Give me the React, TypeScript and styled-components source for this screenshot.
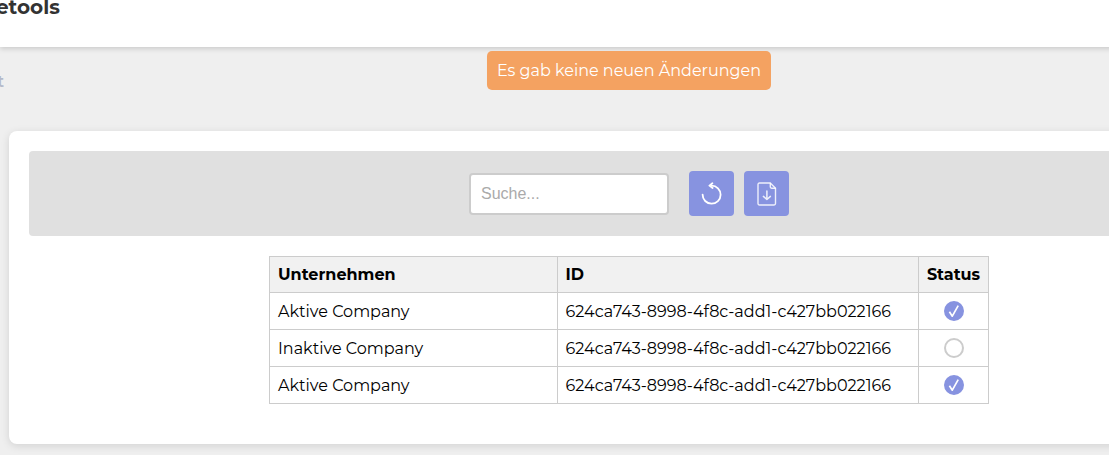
import React from "react";
import styled, { createGlobalStyle } from "styled-components";

const GlobalStyle = createGlobalStyle`
  * { box-sizing: border-box; }
  html { background: #efefef; }
  body {
    margin: 0;
    overflow: hidden;
    background: #efefef;
    color: #000;
    font-family: Montserrat, Inter, sans-serif;
    font-size: 16px;
    line-height: 19px;
  }
`;

/* The workspace runs past the right edge of the window. */
const Page = styled.div`
  width: calc(100% + 149px);
  padding-bottom: 12px;
`;

const Header = styled.header`
  height: 47px;
  background: #fff;
  box-shadow: 0 2px 5px rgba(0, 0, 0, 0.15);
`;

const Brand = styled.h1`
  margin: 0 0 0 -4px;
  color: #333;
  font-size: 20px;
  font-weight: 700;
  line-height: 14px;
`;

const Main = styled.main`
  position: relative;
  padding: 0 9px;
`;

const Crumb = styled.div`
  display: flex;
  justify-content: flex-end;
  width: 4px;
  height: 84px;
  margin-left: -9px;
  padding-top: 25px;
  overflow: hidden;
  color: #b4b9c9;
  font-weight: 600;
`;

const Toast = styled.div`
  position: absolute;
  top: 4px;
  left: 50%;
  padding: 10px;
  transform: translateX(-50%);
  border-radius: 5px;
  background: #f4a261;
  color: #fff;
  text-align: center;
  white-space: nowrap;
`;

const Card = styled.section`
  padding: 20px 20px 40px;
  border-radius: 8px;
  background: #fff;
  box-shadow: 0 2px 8px rgba(0, 0, 0, 0.12);
`;

const Toolbar = styled.div`
  display: flex;
  align-items: center;
  justify-content: center;
  gap: 10px;
  margin-bottom: 20px;
  padding: 20px;
  border-radius: 4px;
  background: #e0e0e0;
`;

const SearchInput = styled.input`
  width: 200px;
  height: 42px;
  margin-right: 10px;
  padding: 0 10px;
  border: 2px solid #ccc;
  border-radius: 4px;
  background: #fff;
  font-family: "Liberation Sans", Arial, sans-serif;
  font-size: 16px;
  &::placeholder { color: #aaa; }
`;

const IconButton = styled.button`
  display: grid;
  place-items: center;
  width: 45px;
  height: 45px;
  padding: 0;
  border: 0;
  border-radius: 4px;
  background: #8793e0;
  color: #fff;
  cursor: pointer;
`;

const Table = styled.table`
  width: 60%;
  margin: 0 auto;
  border-collapse: collapse;
  table-layout: fixed;
`;

const Cell = styled.td`
  height: 37px;
  padding: 0 8px;
  border: 1px solid #ccc;
`;

const HeadCell = styled.th<{ $width?: string }>`
  width: ${(p) => p.$width ?? "auto"};
  height: 36px;
  padding: 0 8px;
  border: 1px solid #ccc;
  background: #f1f1f1;
  font-weight: 700;
  text-align: left;
  white-space: nowrap;
`;

const StatusHead = styled(HeadCell)`
  padding: 0;
  text-align: center;
`;

const Toggle = styled.label`
  display: grid;
  place-items: center;
  & > * { grid-area: 1 / 1; }
  svg { visibility: hidden; pointer-events: none; }
  input:checked + svg { visibility: visible; }
`;

const Tick = styled.input`
  appearance: none;
  width: 20px;
  height: 20px;
  margin: 0;
  border: 2px solid #ccc;
  border-radius: 50%;
  background: #fff;
  &:checked { border-color: #8793e0; background: #8793e0; }
`;

const RefreshIcon = () => (
  <svg width="24" height="24" viewBox="0 0 24 24" fill="none" stroke="currentColor" aria-hidden="true">
    <path d="M2.6 12.6a9 9 0 1 0 9-8.9" strokeWidth="1.8" strokeLinecap="round" />
    <path d="M12.4 1.2 9.4 3.6l3.2 2.4" strokeWidth="1.8" strokeLinecap="round" strokeLinejoin="round" />
  </svg>
);

const DownloadIcon = () => (
  <svg width="24" height="24" viewBox="0 0 24 24" fill="none" stroke="currentColor" strokeOpacity="0.85" strokeLinecap="round" strokeLinejoin="round" aria-hidden="true">
    <path d="M15.3 1H4.4a1.4 1.4 0 0 0-1.4 1.4v19.2a1.4 1.4 0 0 0 1.4 1.4h14.7a1.4 1.4 0 0 0 1.4-1.4V6.2z" strokeWidth="1.4" />
    <path d="M15.3 1.4v3.4a1.4 1.4 0 0 0 1.4 1.4h3.6" strokeWidth="1.4" />
    <path d="M11.9 9v8.4M8.4 14.4l3.5 3.1 3.5-3.1" strokeWidth="1.5" />
  </svg>
);

const CheckIcon = () => (
  <svg width="20" height="20" viewBox="0 0 20 20" fill="none" stroke="#fff" aria-hidden="true">
    <path d="M5.4 10.8 8.3 15.2 14.2 4.6" strokeWidth="1.7" strokeLinejoin="round" />
  </svg>
);

const companyId = "624ca743-8998-4f8c-add1-c427bb022166";
const companies = [
  { name: "Aktive Company", id: companyId, active: true },
  { name: "Inaktive Company", id: companyId, active: false },
  { name: "Aktive Company", id: companyId, active: true },
];

export default function App() {
  return (
    <>
      <GlobalStyle />
      <Page>
        <Header>
          <Brand>etools</Brand>
        </Header>
        <Main>
          <Crumb>t</Crumb>
          <Toast role="status">Es gab keine neuen Änderungen</Toast>
          <Card>
            <Toolbar>
              <SearchInput type="text" placeholder="Suche..." aria-label="Suche" />
              <IconButton type="button" aria-label="Aktualisieren"><RefreshIcon /></IconButton>
              <IconButton type="button" aria-label="Herunterladen"><DownloadIcon /></IconButton>
            </Toolbar>
            <Table>
              <thead>
                <tr>
                  <HeadCell $width="40%">Unternehmen</HeadCell>
                  <HeadCell>ID</HeadCell>
                  <StatusHead $width="70px">Status</StatusHead>
                </tr>
              </thead>
              <tbody>
                {companies.map((company, index) => (
                  <tr key={index}>
                    <Cell>{company.name}</Cell>
                    <Cell>{company.id}</Cell>
                    <Cell>
                      <Toggle>
                        <Tick type="checkbox" defaultChecked={company.active} aria-label={`Status ${company.name}`} />
                        <CheckIcon />
                      </Toggle>
                    </Cell>
                  </tr>
                ))}
              </tbody>
            </Table>
          </Card>
        </Main>
      </Page>
    </>
  );
}
